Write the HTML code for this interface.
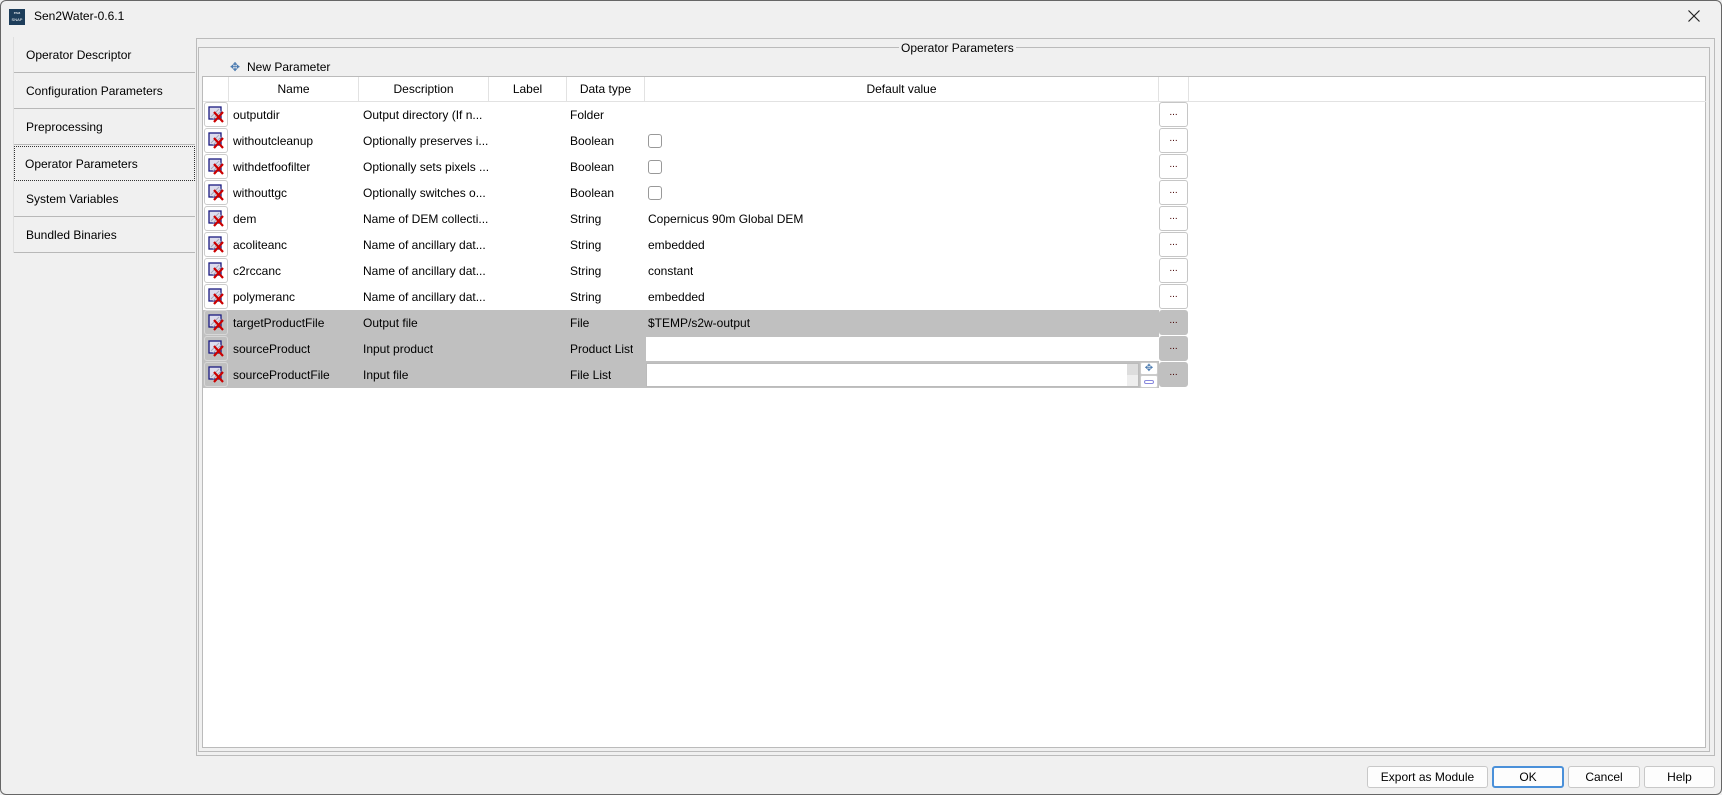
<!DOCTYPE html>
<html><head><meta charset="utf-8"><style>
*{margin:0;padding:0;box-sizing:border-box}
body{width:1722px;height:795px;background:#f0f0f0;font-family:"Liberation Sans",sans-serif;font-size:12px;color:#000;position:relative;overflow:hidden;border:1px solid #666;border-radius:6px}
.abs{position:absolute}
.tab{position:absolute;left:13px;width:181px;height:35px;border-bottom:1px solid #b8b8b8;padding:10px 0 0 12px;font-size:12px}
.cell{position:absolute;white-space:nowrap;overflow:hidden}
.btn{position:absolute;height:22px;border:1px solid #c8c8c8;background:#fdfdfd;border-radius:3px;text-align:center;line-height:20px;font-size:12px}
.dots{position:absolute;left:1158px;width:29px;height:25px;border:1px solid #c6c6c6;border-radius:3px;background:#fff;text-align:center;font-size:10px;line-height:20px;color:#400}
.ic{position:absolute;left:203px;width:24px;height:25px;border:1px solid #ccc;border-radius:3px;background:#fff}
.cb{position:absolute;left:647px;width:14px;height:14px;border:1px solid #999;border-radius:3px;background:#fff}
</style></head><body>
<div class="abs" style="left:8px;top:8px;width:16px;height:16px;background:#1d3d5a;color:#fff;font-size:4px;line-height:7px;text-align:center">esa<br>SNAP</div>
<div class="abs" style="left:33px;top:8px;font-size:12px">Sen2Water-0.6.1</div>
<svg class="abs" style="left:1687px;top:9px" width="12" height="12"><path d="M0.5 0.5L11.5 11.5M11.5 0.5L0.5 11.5" stroke="#222" stroke-width="1.2"/></svg>

<div class="abs" style="left:12px;top:36px;width:183px;height:216px;border-left:1px solid #e0e0e0"></div>
<div class="tab" style="top:37px">Operator Descriptor</div>
<div class="tab" style="top:73px">Configuration Parameters</div>
<div class="tab" style="top:109px">Preprocessing</div>
<div class="tab" style="top:145px;border:1px dotted #333;padding-left:10px">Operator Parameters</div>
<div class="tab" style="top:181px">System Variables</div>
<div class="tab" style="top:217px">Bundled Binaries</div>

<div class="abs" style="left:195px;top:37px;width:1519px;height:718px;border:1px solid #bbb"></div>
<div class="abs" style="left:197px;top:46px;width:1512px;height:705px;border:1px solid #bbb"></div>
<div class="abs" style="left:898px;top:40px;font-size:12px;background:#f0f0f0;padding:0 2px">Operator Parameters</div>
<div class="abs" style="left:229px;top:59px;color:#4a7ab0;font-size:12px">✥</div>
<div class="abs" style="left:246px;top:59px">New Parameter</div>

<div class="abs" style="left:201px;top:75px;width:1504px;height:672px;background:#fff;border:1px solid #bbb"></div>
<div class="abs" style="left:202px;top:76px;width:985px;height:25px;border-bottom:1px solid #e2e2e2"></div>
<div class="abs" style="left:202px;top:100px;width:1503px;height:1px;background:#e2e2e2"></div>
<div class="cell" style="left:227px;top:76px;width:130px;height:25px;border-left:1px solid #e2e2e2;text-align:center;line-height:25px">Name</div>
<div class="cell" style="left:357px;top:76px;width:130px;height:25px;border-left:1px solid #e2e2e2;text-align:center;line-height:25px">Description</div>
<div class="cell" style="left:487px;top:76px;width:78px;height:25px;border-left:1px solid #e2e2e2;text-align:center;line-height:25px">Label</div>
<div class="cell" style="left:565px;top:76px;width:78px;height:25px;border-left:1px solid #e2e2e2;text-align:center;line-height:25px">Data type</div>
<div class="cell" style="left:643px;top:76px;width:515px;height:25px;border-left:1px solid #e2e2e2;border-right:1px solid #e2e2e2;text-align:center;line-height:25px">Default value</div>
<div class="cell" style="left:1158px;top:76px;width:30px;height:25px;border-right:1px solid #e2e2e2"></div>

<div class="abs" style="left:202px;top:309px;width:956px;height:78px;background:#c0c0c0"></div>
<div class="abs" style="left:645px;top:336px;width:513px;height:24px;background:#fff"></div>
<div class="abs" style="left:645px;top:362px;width:493px;height:24px;background:#fff;border:1px solid #bbb"></div>
<div class="abs" style="left:1126px;top:363px;width:11px;height:22px;background:#eee"></div>
<div class="abs" style="left:1126px;top:363px;width:11px;height:11px;background:#ddd"></div>
<div class="abs" style="left:1139px;top:361px;width:18px;height:13px;border:1px solid #ccc;border-radius:2px;background:#fff;color:#4a7ab0;font-size:10px;text-align:center;line-height:11px">✥</div>
<div class="abs" style="left:1139px;top:374px;width:18px;height:13px;border:1px solid #ccc;border-radius:2px;background:#fff"><div style="margin:4px 3px;height:4px;border:1px solid #8888dd;border-radius:2px"></div></div>

<div id="rows"></div>
<script>
var d=[["outputdir","Output directory (If n...","Folder",""],["withoutcleanup","Optionally preserves i...","Boolean","cb"],["withdetfoofilter","Optionally sets pixels ...","Boolean","cb"],["withouttgc","Optionally switches o...","Boolean","cb"],["dem","Name of DEM collecti...","String","Copernicus 90m Global DEM"],["acoliteanc","Name of ancillary dat...","String","embedded"],["c2rccanc","Name of ancillary dat...","String","constant"],["polymeranc","Name of ancillary dat...","String","embedded"],["targetProductFile","Output file","File","$TEMP/s2w-output"],["sourceProduct","Input product","Product List",""],["sourceProductFile","Input file","File List",""]];
var h="";
d.forEach(function(r,i){var y=101+i*26;var g=i>=8;
h+='<div class="ic" style="top:'+y+'px;'+(g?'background:#c0c0c0;border-color:#d8d8d8':'')+'"><svg width="22" height="23" viewBox="0 0 22 23"><rect x="4" y="4" width="12" height="12" fill="#dde" stroke="#1a1a80" stroke-width="1.3"/><path d="M6 14L14 6M8 16L16 8" stroke="#aab" stroke-width="1"/><path d="M9 9L18 19M18 9L9 19" stroke="#c00" stroke-width="2.2"/></svg></div>';
h+='<div class="cell" style="left:232px;top:'+y+'px;line-height:26px">'+r[0]+'</div>';
h+='<div class="cell" style="left:362px;top:'+y+'px;line-height:26px">'+r[1]+'</div>';
h+='<div class="cell" style="left:569px;top:'+y+'px;line-height:26px">'+r[2]+'</div>';
if(r[3]=="cb")h+='<div class="cb" style="top:'+(y+6)+'px"></div>';else if(r[3])h+='<div class="cell" style="left:647px;top:'+y+'px;line-height:26px">'+r[3]+'</div>';
h+='<div class="dots" style="top:'+y+'px;'+(g?'background:#c0c0c0;border-color:#c0c0c0':'')+'">...</div>';
});
document.getElementById("rows").innerHTML=h;
</script>

<div class="btn" style="left:1366px;top:765px;width:121px">Export as Module</div>
<div class="btn" style="left:1491px;top:765px;width:72px;border:2px solid #4a90d9;line-height:18px">OK</div>
<div class="btn" style="left:1567px;top:765px;width:72px">Cancel</div>
<div class="btn" style="left:1643px;top:765px;width:71px">Help</div>
</body></html>
